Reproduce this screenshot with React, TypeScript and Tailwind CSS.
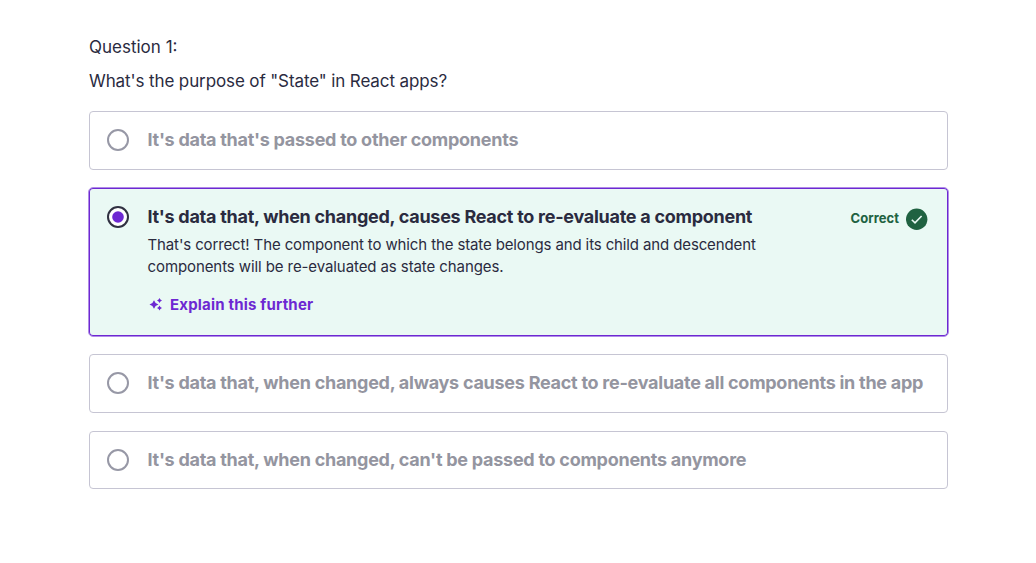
import React from "react";

type Option = {
  text: string;
  height: string;
};

const before: Option[] = [
  { text: "It's data that's passed to other components", height: "h-[59px] pb-px" },
];

const after: Option[] = [
  { text: "It's data that, when changed, always causes React to re-evaluate all components in the app", height: "h-[59px] pb-px" },
  { text: "It's data that, when changed, can't be passed to components anymore", height: "h-[58px]" },
];

function Radio({ checked = false }: { checked?: boolean }) {
  return (
    <svg className="size-[22px] shrink-0" viewBox="0 0 22 22" fill="none" aria-hidden="true">
      <circle cx="11" cy="11" r="10" fill={checked ? "#fff" : "none"} stroke={checked ? "#303141" : "#9798a6"} strokeWidth="2" />
      {checked && <circle cx="11" cy="11" r="5.8" fill="#6d28d2" />}
    </svg>
  );
}

function AnswerRow({ text, height }: Option) {
  return (
    <div className={`flex items-center gap-[18.5px] rounded-[4px] border border-[#c6c5d3] pl-[17px] ${height}`}>
      <Radio />
      <span className="whitespace-nowrap text-[18px] leading-[24px] font-bold tracking-[-0.265px] text-[#9495a0]">{text}</span>
    </div>
  );
}

export default function App() {
  return (
    <main className="min-h-[563px] bg-white pt-[35px] pl-[89px] font-['Inter',sans-serif] text-[#2a2b3f]">
      <p className="text-[17px] leading-[24px]">Question 1:</p>
      <p className="mt-[10px] text-[17px] leading-[24px] tracking-[-0.11px]">What's the purpose of "State" in React apps?</p>

      <div className="mt-[18px] flex w-[859px] flex-col gap-[18px]">
        {before.map((o) => <AnswerRow key={o.text} {...o} />)}

        <div className="-mx-px -mt-px -mb-px flex h-[150px] items-start rounded-[5px] border border-[#b08be8] bg-[#eaf9f4] pt-[17px] pr-[20px] pl-[18px] inset-ring-1 inset-ring-[#6d28d2]">
          <div className="mt-px"><Radio checked /></div>
          <div className="ml-[18.5px] whitespace-nowrap">
            <p className="text-[18px] leading-[24px] font-bold tracking-[-0.27px]">It's data that, when changed, causes React to re-evaluate a component</p>
            <p className="mt-[5px] text-[15px] leading-[22px] tracking-[-0.125px]">That's correct! The component to which the state belongs and its child and descendent</p>
            <p className="text-[15px] leading-[22px] tracking-[-0.09px]">components will be re-evaluated as state changes.</p>
            <button className="mt-[16px] flex items-center text-[15px] leading-[22px] font-bold tracking-[0.19px] text-[#6d28d2]">
              <svg className="mr-[5px] ml-[1.5px] size-[16px]" viewBox="0 0 16 16" fill="currentColor" aria-hidden="true">
                <path d="M5 3.2 6.6 6 9.5 7.5 6.6 9 5 11.8 3.4 9 .5 7.5 3.4 6Z" />
                <path d="M10.5 1 11.4 2.6 13 3.5 11.4 4.4 10.5 6 9.6 4.4 8 3.5 9.6 2.6Z" />
                <path d="M10.5 8.5 11.4 10.1 13 11 11.4 11.9 10.5 13.5 9.6 11.9 8 11 9.6 10.1Z" />
              </svg>
              Explain this further
            </button>
          </div>
          <div className="mt-[3px] ml-auto flex items-start gap-[7px] text-[#206241]">
            <span className="text-[13px] leading-[20px] font-bold tracking-[0.04px]">Correct</span>
            <svg className="size-[22px]" viewBox="0 0 22 22" fill="none" aria-hidden="true">
              <circle cx="10.7" cy="11.2" r="10.7" fill="#206241" />
              <path d="m5.8 11.7 3.2 3.2 6.6-6.9" stroke="#eaf9f4" strokeWidth="1.6" />
            </svg>
          </div>
        </div>

        {after.map((o) => <AnswerRow key={o.text} {...o} />)}
      </div>
    </main>
  );
}
